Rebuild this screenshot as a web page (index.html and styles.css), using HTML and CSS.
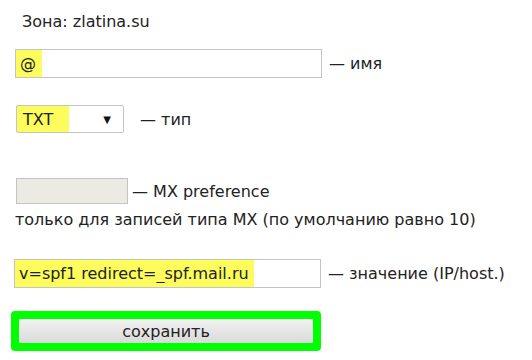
FILE: index.html
```html
<!DOCTYPE html>
<html lang="ru">
<head>
    <meta charset="UTF-8">
    <title>Редактирование записи</title>
    <link rel="stylesheet" href="styles.css">
</head>
<body>
    <form class="record-form">
        <p class="zone">Зона: zlatina.su</p>

        <div class="row row-name">
            <input type="text" class="field field-wide mark-name" value="@">
            <span class="hint">— имя</span>
        </div>

        <div class="row row-type">
            <div class="select mark-type">
                <span>TXT</span>
                <span class="arrow">▼</span>
            </div>
            <span class="hint">— тип</span>
        </div>

        <div class="row row-pref">
            <input type="text" class="field field-small" disabled>
            <span class="hint">— MX preference</span>
        </div>
        <p class="note">только для записей типа MX (по умолчанию равно 10)</p>

        <div class="row row-value">
            <input type="text" class="field field-wide mark-value" value="v=spf1 redirect=_spf.mail.ru">
            <span class="hint">— значение (IP/host.)</span>
        </div>

        <div class="save-box">
            <button type="submit" class="save">сохранить</button>
        </div>
    </form>
</body>
</html>
```

FILE: styles.css
```css
body {
    margin: 0;
    background: #fff;
    font-family: "DejaVu Sans", Verdana, sans-serif;
    font-size: 16px;
    color: #222;
}

.record-form {
    padding: 12px 0 0 15px;
}

.zone {
    margin: 0 0 0 7px;
    line-height: 20px;
}

.row {
    display: flex;
    align-items: center;
}

.row-name {
    margin-top: 17px;
}

.row-type {
    margin-top: 27px;
}

.row-pref {
    margin-top: 45px;
}

.row-value {
    margin-top: 29px;
    margin-left: -1px;
}

.field {
    box-sizing: border-box;
    height: 29px;
    margin: 0;
    padding: 0 4px;
    border: 1px solid #c4c4c4;
    font-family: inherit;
    font-size: 16px;
    color: #222;
    outline: none;
}

.field-wide {
    width: 307px;
}

.field-small {
    width: 112px;
    height: 26px;
    margin-left: 1px;
    background: #ebebe4;
}

/* yellow marker over the filled values */
.mark-name {
    background: linear-gradient(to right, #fcfc5c 0, #fcfc5c 26px, #fff 26px);
}

.mark-value {
    background: linear-gradient(to right, #fcfc5c 0, #fcfc5c 239px, #fff 239px);
}

.select {
    box-sizing: border-box;
    width: 108px;
    height: 28px;
    margin-left: 1px;
    padding: 0 12px 0 6px;
    border: 1px solid #c4c4c4;
    border-radius: 2px;
    display: flex;
    align-items: center;
    justify-content: space-between;
}

.mark-type {
    background: linear-gradient(to right, #fcfc5c 0, #fcfc5c 52px, #fff 52px);
}

.arrow {
    font-size: 10px;
    color: #111;
}

.hint {
    margin-left: 7px;
}

.row-type .hint {
    margin-left: 16px;
}

.row-pref .hint {
    margin-left: 4px;
}

.note {
    margin: 6px 0 0;
    line-height: 20px;
}

.save-box {
    box-sizing: border-box;
    width: 310px;
    margin: 23px 0 0 -4px;
    padding: 8px;
    border-radius: 4px;
    background: #00ff00;
}

.save {
    display: block;
    width: 100%;
    height: 24px;
    border: none;
    border-radius: 1px;
    background: linear-gradient(#f2f2f2, #dadada);
    font-family: inherit;
    font-size: 16px;
    color: #222;
}
```
